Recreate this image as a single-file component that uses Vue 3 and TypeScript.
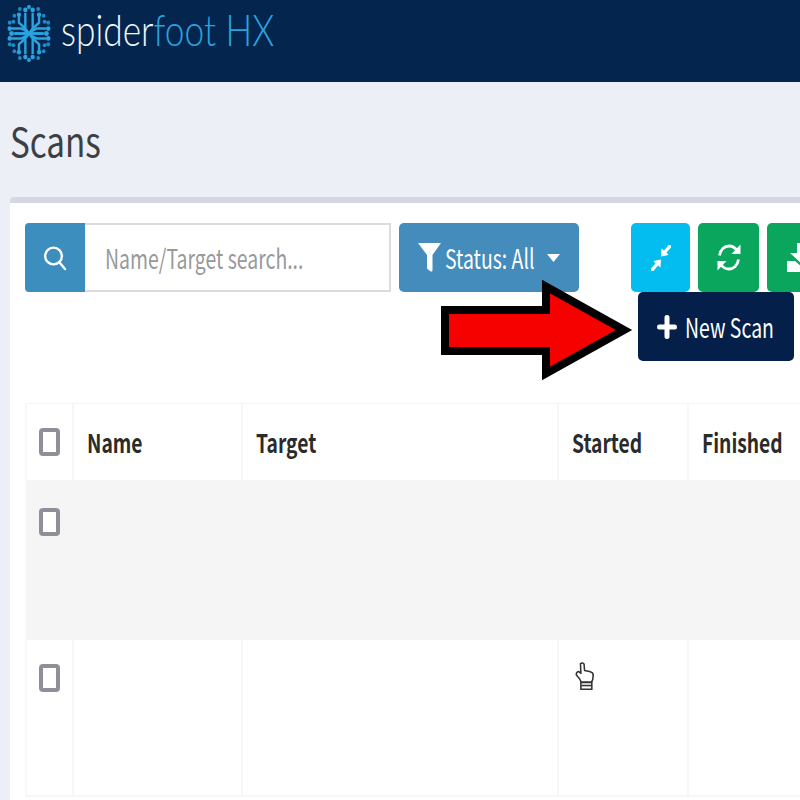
<script setup lang="ts">
const columns = ['Name', 'Target', 'Started', 'Finished']

// logo is built from one quadrant, mirrored to the other three
const quadrants = ['scale(1 1)', 'scale(-1 1)', 'scale(1 -1)', 'scale(-1 -1)']
const traces = ['M0 0 L4 -5 V-21', 'M4 -5 L11 -11 V-17', 'M0 0 H16', 'M2 -2 L8 -5 H19']
const dots = [
  [4, -24, 2.4],
  [11, -19, 2.4],
  [19, 0, 2.4],
  [21, -5, 2.4],
  [17, -12, 2.1],
  [21, -11, 2.1],
  [16, -18, 2],
  [10, -25, 2],
  [0, -27, 2],
]

const rows = [
  { height: 160, shaded: true, pointer: false, boxTop: 28 },
  { height: 155, shaded: false, pointer: true, boxTop: 24 },
]
</script>

<template>
  <div class="page">
    <header class="topbar">
      <svg class="logo" viewBox="-24 -30 48 60" preserveAspectRatio="none" aria-hidden="true">
        <g v-for="q in quadrants" :key="q" :transform="q">
          <path v-for="t in traces" :key="t" :d="t" fill="none" stroke="#2ba3df" stroke-width="2.6" />
          <circle
            v-for="(d, i) in dots"
            :key="i"
            :cx="d[0]"
            :cy="d[1]"
            :r="d[2]"
            fill="#2ba3df"
            :opacity="i > 3 ? 0.8 : 1"
          />
        </g>
      </svg>
      <span class="brand"><span class="brand-white">spider</span>foot HX</span>
    </header>

    <h1 class="title"><span class="narrow">Scans</span></h1>

    <section class="card">
      <div class="toolbar">
        <div class="search">
          <span class="search-addon">
            <svg width="24" height="26" viewBox="0 0 24 26" fill="none" stroke="#fff" stroke-width="2.4">
              <circle cx="10.5" cy="11" r="8.4" />
              <path d="M16.5 17.5 L22 24" stroke-linecap="round" />
            </svg>
          </span>
          <span class="search-input"><span class="narrow">Name/Target search...</span></span>
        </div>

        <button class="status">
          <svg width="23" height="30" viewBox="0 0 23 30" fill="#fff">
            <path d="M0 0 H23 L14.5 12 V27 Q14.5 29.5 12 28 L9 25.5 V12 Z" />
          </svg>
          <span class="narrow status-label">Status: All</span>
          <svg class="caret" width="13" height="8" viewBox="0 0 13 8" fill="#fff"><path d="M0 0 H13 L6.5 8 Z" /></svg>
        </button>

        <div class="actions">
          <div class="action-row">
            <button class="icon-btn cyan">
              <svg width="20" height="26" viewBox="0 0 20 26" fill="#fff">
                <path d="M18.500 -1 L21 1.500 L15.500 7.500 L17.500 10 L10 11.500 L10.500 3.500 L13 5.500 Z" />
                <path d="M1.500 27 L-1 24.500 L4.500 18.500 L2.500 16 L10 14.500 L9.500 22.500 L7 20.500 Z" />
              </svg>
            </button>
            <button class="icon-btn green">
              <svg width="24" height="29" viewBox="0 0 24 29" fill="none" stroke="#fff" stroke-width="2.8">
                <path d="M2.500 12.500 C3.500 6 8 3 12 3 C15.500 3 18 4.500 20 7.500" />
                <path d="M21.500 16.500 C20.500 23 16 26 12 26 C8.500 26 6 24.500 4 21.500" />
                <path d="M23.500 1.500 V11 H14.500 Z" fill="#fff" stroke="none" />
                <path d="M0.500 27.500 V18 H9.500 Z" fill="#fff" stroke="none" />
              </svg>
            </button>
            <button class="icon-btn green download">
              <svg width="30" height="29" viewBox="0 0 30 29" fill="#fff">
                <path d="M10 0 H20 V10 H27 L15 21 L3 10 H10 Z" />
                <path d="M0 18 H8 L15 24 L22 18 H30 V29 H0 Z" />
              </svg>
            </button>
          </div>
          <button class="new-scan">
            <svg width="20" height="26" viewBox="0 0 20 26" fill="#fff">
              <path d="M7.500 3 Q7.500 1 10 1 Q12.500 1 12.500 3 V10.500 H18 Q20 10.500 20 13 Q20 15.500 18 15.500 H12.500 V23 Q12.500 25 10 25 Q7.500 25 7.500 23 V15.500 H2 Q0 15.500 0 13 Q0 10.500 2 10.500 H7.500 Z" />
            </svg>
            <span class="narrow new-label">New Scan</span>
          </button>
        </div>
      </div>

      <div class="table">
        <div class="row head">
          <div class="cell check"><span class="box" /></div>
          <div v-for="c in columns" :key="c" class="cell"><span class="narrow">{{ c }}</span></div>
        </div>
        <div
          v-for="(r, i) in rows"
          :key="i"
          class="row"
          :class="{ shaded: r.shaded }"
          :style="{ height: r.height + 'px' }"
        >
          <div class="cell check" :style="{ paddingTop: r.boxTop + 'px' }"><span class="box" /></div>
          <div v-for="c in columns" :key="c" class="cell" />
        </div>
      </div>
    </section>

    <!-- annotation drawn over the screenshot -->
    <svg class="arrow" width="800" height="800" viewBox="0 0 800 800" aria-hidden="true">
      <path
        d="M445 310 H546 V286.500 L624 330 L546 373.500 V351 H445 Z"
        fill="#f70000"
        stroke="#000"
        stroke-width="8"
      />
    </svg>
    <svg class="hand" width="20" height="30" viewBox="0 0 22 32" fill="#fff" stroke="#333" stroke-width="1.7" aria-hidden="true">
      <path d="M6 2.500 Q8.500 0.500 10 3 L10.500 10 L16 11 Q20 12 20 15 L19.500 20 L18 23 H7 L5 19 L1.500 15 Q1 11.500 4 11 L6.500 13 Z" stroke-linejoin="round" />
      <path d="M6.500 23 H18.500 V30.500 H6.500 Z" />
      <path d="M7 26.500 H18" />
    </svg>
  </div>
</template>

<style>
html,
body {
  margin: 0;
  overflow: hidden;
}
</style>

<style scoped>
.page {
  position: relative;
  width: 800px;
  height: 800px;
  overflow: hidden;
  background: #eceff6;
  font-family: "Noto Sans CJK SC", "Open Sans", sans-serif;
}

svg {
  flex: none;
}

/* the source capture is squeezed horizontally, so text is narrowed to follow */
.narrow {
  display: inline-block;
  transform: scaleX(0.72);
  transform-origin: left center;
  white-space: nowrap;
}

.topbar {
  display: flex;
  align-items: flex-start;
  height: 82px;
  background: #04264e;
  box-sizing: border-box;
  padding: 4px 0 0 7px;
  gap: 10px;
}

.logo {
  width: 44px;
  height: 59px;
}

.brand {
  font-family: Lato, "Open Sans", sans-serif;
  font-weight: 300;
  font-size: 43px;
  line-height: 52px;
  color: #2ba3df;
  display: inline-block;
  transform: scaleX(0.82);
  transform-origin: left center;
  white-space: nowrap;
}

.brand-white {
  color: #f2f6fa;
}

.title {
  margin: 0;
  height: 115px;
  padding-left: 10px;
  box-sizing: border-box;
  font-weight: 400;
  font-size: 40px;
  line-height: 117px;
  color: #3b4045;
}

.title .narrow {
  transform: scaleX(0.83);
}

.card {
  margin-left: 10px;
  height: 603px;
  box-sizing: border-box;
  background: #fff;
  border-top: 6px solid #d5d7e2;
  border-radius: 4px 0 0 0;
  padding: 20px 0 0 15px;
}

.toolbar {
  display: flex;
  align-items: flex-start;
  height: 138px;
}

.search {
  display: flex;
  width: 366px;
  height: 69px;
  flex: none;
}

.search-addon {
  width: 60px;
  flex: none;
  background: #3c8ebe;
  border-radius: 4px 0 0 4px;
  display: flex;
  align-items: center;
  justify-content: center;
}

.search-input {
  flex: 1;
  box-sizing: border-box;
  border: 2px solid #dcdcdc;
  border-left: none;
  padding-left: 20px;
  font-size: 27px;
  line-height: 65px;
  color: #97999c;
}

.status {
  margin-left: 8px;
  width: 180px;
  height: 69px;
  flex: none;
  border: none;
  border-radius: 5px;
  background: #448cbc;
  color: #fff;
  display: flex;
  align-items: center;
  padding: 0 0 0 19px;
  font: inherit;
  font-size: 27px;
}

.status-label {
  margin-left: 4px;
  width: 96px;
}

.caret {
  margin-left: 6px;
}

.actions {
  margin-left: 52px;
  flex: none;
}

.action-row {
  display: flex;
  gap: 8px;
}

.icon-btn {
  height: 69px;
  width: 59px;
  border: none;
  border-radius: 5px;
  padding: 0;
  display: flex;
  align-items: center;
  justify-content: center;
}

.icon-btn.cyan {
  background: #04bdf0;
}

.icon-btn.green {
  background: #0aa65d;
  width: 61px;
}

.icon-btn.download {
  padding-left: 20px;
  justify-content: flex-start;
}

.new-scan {
  margin-left: 7px;
  width: 156px;
  height: 69px;
  border: none;
  border-radius: 5px;
  background: #04204a;
  color: #fff;
  display: flex;
  align-items: center;
  padding: 0 0 0 19px;
  font: inherit;
  font-size: 27px;
}

.new-label {
  margin-left: 8px;
}

.table {
  width: 900px;
  margin-top: 42px;
  border-top: 1px solid #f4f4f4;
  border-left: 2px solid #f8f8f8;
  border-bottom: 2px solid #f6f6f6;
}

.row {
  display: grid;
  grid-template-columns: 47px 169px 316px 130px 1fr;
}

.row.head {
  height: 76px;
}

.row.shaded {
  background: #f5f5f5;
}

.cell {
  border-right: 2px solid #f7f7f7;
  box-sizing: border-box;
  padding-left: 13px;
  font-weight: 700;
  font-size: 26px;
  line-height: 76px;
  color: #2b2b2b;
}

.cell .narrow {
  transform: scaleX(0.74);
}

.shaded .cell {
  border-right-color: transparent;
}

.cell.check {
  padding: 24px 0 0 12px;
  line-height: 0;
}

.box {
  display: block;
  width: 21px;
  height: 28px;
  box-sizing: border-box;
  border: 4px solid #8f8f99;
  border-radius: 4px;
  background: #fff;
}

.arrow {
  position: absolute;
  left: 0;
  top: 0;
  pointer-events: none;
}

.hand {
  position: absolute;
  left: 575px;
  top: 661px;
}
</style>
